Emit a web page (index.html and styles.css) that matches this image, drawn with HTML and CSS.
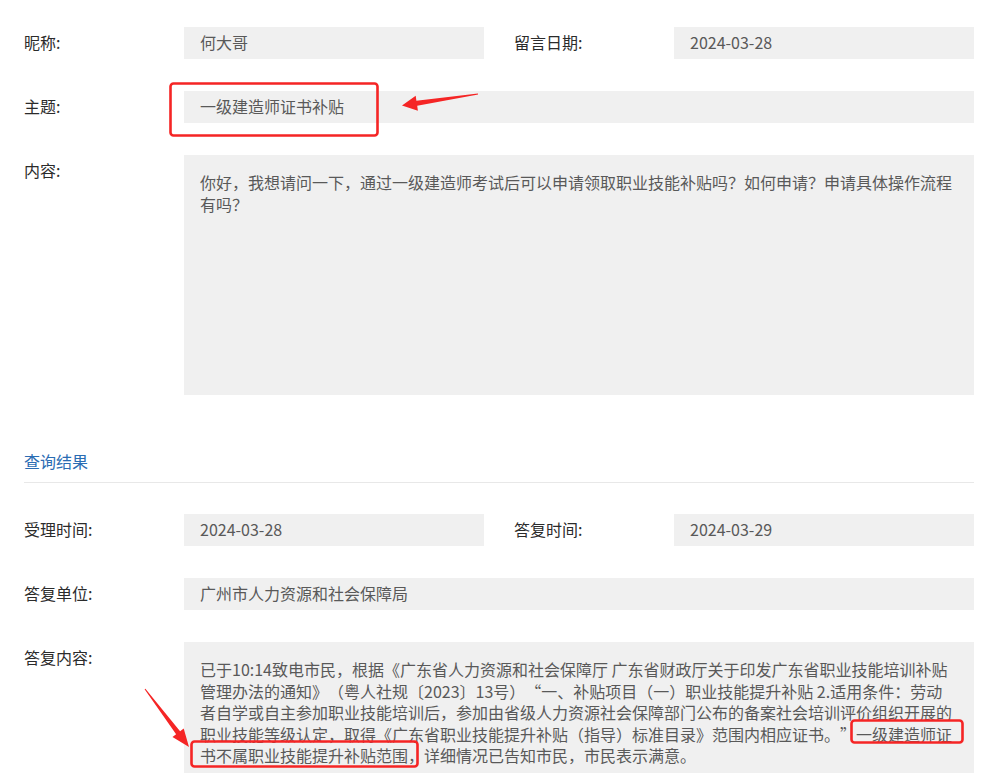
FILE: index.html
```html
<!DOCTYPE html>
<html lang="zh-CN">
<head>
<meta charset="utf-8">
<title>留言详情</title>
<link rel="stylesheet" href="styles.css">
</head>
<body>
<div class="page">
  <div class="row">
    <div class="label">昵称:</div>
    <div class="value">何大哥</div>
    <div class="label label-right">留言日期:</div>
    <div class="value">2024-03-28</div>
  </div>
  <div class="row">
    <div class="label">主题:</div>
    <div class="value span3">一级建造师证书补贴</div>
  </div>
  <div class="row row-tall">
    <div class="label">内容:</div>
    <div class="value span3 textbox question">你好，我想请问一下，通过一级建造师考试后可以申请领取职业技能补贴吗？如何申请？申请具体操作流程<br>有吗？</div>
  </div>

  <div class="section-title">查询结果</div>

  <div class="row">
    <div class="label">受理时间:</div>
    <div class="value">2024-03-28</div>
    <div class="label label-right">答复时间:</div>
    <div class="value">2024-03-29</div>
  </div>
  <div class="row">
    <div class="label">答复单位:</div>
    <div class="value span3">广州市人力资源和社会保障局</div>
  </div>
  <div class="row row-auto">
    <div class="label">答复内容:</div>
    <div class="value span3 textbox answer">已于10:14致电市民，根据《广东省人力资源和社会保障厅 广东省财政厅关于印发广东省职业技能培训补贴<br>管理办法的通知》（粤人社规〔2023〕13号）“一、补贴项目（一）职业技能提升补贴 2.适用条件：劳动<br>者自学或自主参加职业技能培训后，参加由省级人力资源社会保障部门公布的备案社会培训评价组织开展的<br>职业技能等级认定，取得《广东省职业技能提升补贴（指导）标准目录》范围内相应证书。”一级建造师证<br>书不属职业技能提升补贴范围，详细情况已告知市民，市民表示满意。</div>
  </div>

  <svg class="annotations" width="994" height="773" viewBox="0 0 994 773" aria-hidden="true">
    <rect x="170.5" y="83.5" width="207" height="52" rx="3" fill="none" stroke="#f52525" stroke-width="2.6"/>
    <polygon points="477.9,93.4 416.4,100.8 415.7,95.8 402,105.5 417.9,110.7 417.2,105.7 478.1,94.6" fill="#f52525"/>
    <rect x="191.5" y="741.5" width="226" height="25" rx="3" fill="none" stroke="#f52525" stroke-width="2.6"/>
    <rect x="851.5" y="720.5" width="111" height="22" rx="3" fill="none" stroke="#f52525" stroke-width="2.6"/>
    <polygon points="144.6,689.3 176.1,734.2 172.5,736.9 189,747 183.7,728.5 180.1,731.2 145.4,688.7" fill="#f52525"/>
  </svg>
</div>
</body>
</html>
```

FILE: styles.css
```css
html, body {
  margin: 0;
  padding: 0;
  background: #ffffff;
}

body {
  font-family: "Noto Sans CJK SC", "Noto Sans", sans-serif;
  font-size: 16px;
  color: #333333;
  overflow: hidden;
  text-spacing-trim: space-all;
}

.page {
  position: relative;
  width: 950px;
  padding: 27px 20px 0 24px;
  height: 746px;
}

.row {
  display: grid;
  grid-template-columns: 160px 300px 190px 300px;
  height: 32px;
  margin-bottom: 32px;
}

.row-tall {
  height: 240px;
}

.row-auto {
  height: auto;
  margin-bottom: 0;
}

.label {
  line-height: 31px;
  color: #2b2b2b;
  white-space: nowrap;
}

.label-right {
  padding-left: 30px;
}

.value {
  background: #f0f0f0;
  color: #595959;
  line-height: 31px;
  padding: 0 16px;
  white-space: nowrap;
}

.span3 {
  grid-column: 2 / 5;
}

.textbox {
  line-height: 21.6px;
  padding: 17px 16px;
  white-space: nowrap;
}

.answer {
  padding: 17px 16px 20px;
}

.section-title {
  margin-top: 55px;
  line-height: 23px;
  padding-bottom: 9px;
  border-bottom: 1px solid #e8e8e8;
  color: #2a6cb3;
  margin-bottom: 31px;
}

.annotations {
  position: absolute;
  left: 0;
  top: 0;
  pointer-events: none;
}
```
